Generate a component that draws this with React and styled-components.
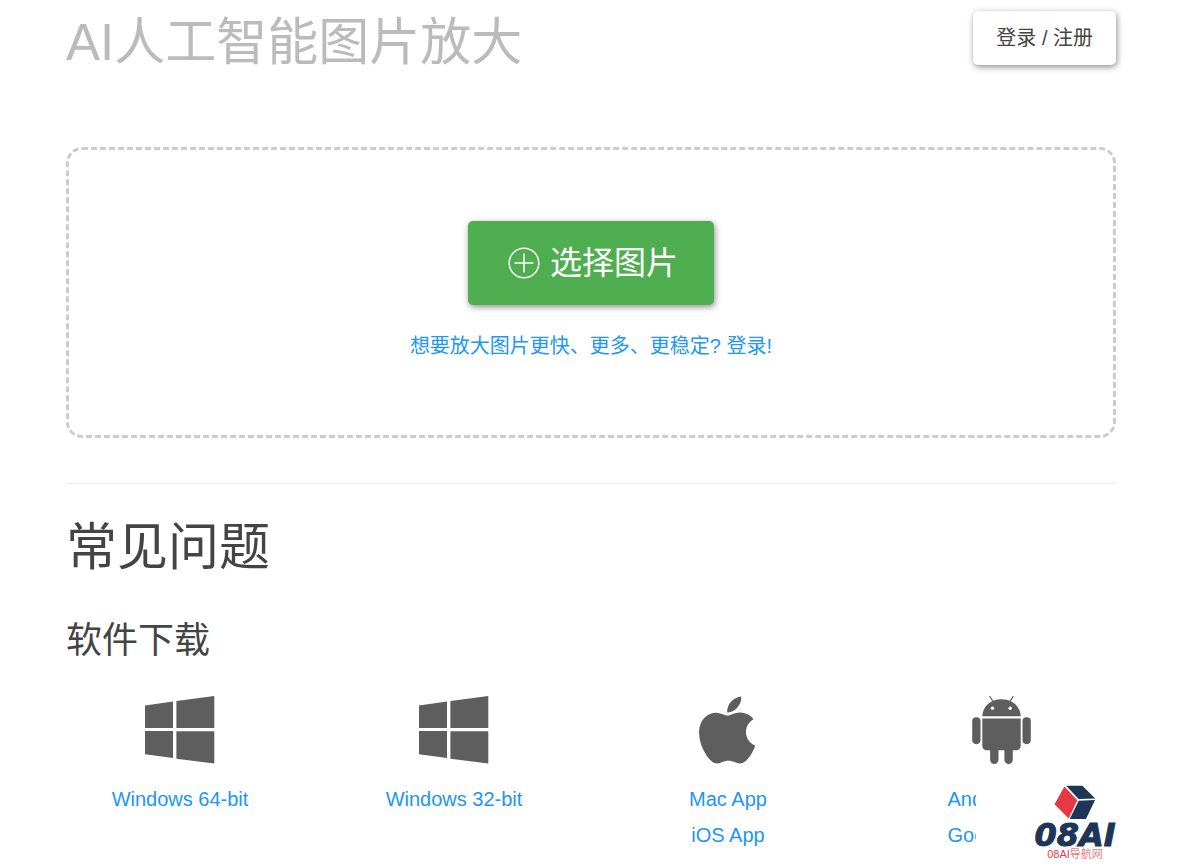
import React from 'react';
import styled, { createGlobalStyle } from 'styled-components';

const GlobalStyle = createGlobalStyle`
  * {
    box-sizing: border-box;
  }
  body {
    margin: 0;
    background: #fff;
    color: #444;
    font-family: "Liberation Sans", "Noto Sans CJK SC", sans-serif;
    font-size: 20px;
    line-height: 36px;
  }
`;

const Page = styled.div`
  padding: 11px 66px 15px;
`;

const Header = styled.header`
  display: flex;
  justify-content: space-between;
  align-items: flex-start;
  margin-bottom: 72px;
`;

const Title = styled.h1`
  margin: 0;
  font-size: 51px;
  font-weight: 400;
  line-height: 64px;
  color: #bbb;
`;

const Button = styled.button`
  border: 0;
  border-radius: 5px;
  font-family: inherit;
  cursor: pointer;
  box-shadow: 1px 2px 6px rgba(0, 0, 0, 0.45);
`;

const LoginButton = styled(Button)`
  padding: 16px 23px;
  background: #fff;
  color: #444;
  font-size: 20px;
  line-height: 22px;
`;

const SelectButton = styled(Button)`
  display: flex;
  align-items: center;
  gap: 10px;
  padding: 20px 36px 20px 40px;
  background: #4faf50;
  color: #fff;
  font-size: 32px;
  line-height: 44px;
`;

const DropZone = styled.section`
  display: flex;
  flex-direction: column;
  align-items: center;
  gap: 23px;
  padding: 71px 20px;
  border: 3px dashed #ccc;
  border-radius: 16px;
`;

const Link = styled.a`
  color: #2196f3;
  text-decoration: none;
`;

const Divider = styled.hr`
  height: 1px;
  margin: 45px 0 26px;
  border: 0;
  background: #eee;
`;

const Heading = styled.h2`
  margin: 0 0 28px;
  font-size: 51px;
  font-weight: 400;
  line-height: 76px;
`;

const SubHeading = styled.h3`
  margin: 0 0 28px;
  font-size: 36px;
  font-weight: 400;
  line-height: 54px;
`;

const Downloads = styled.div`
  display: grid;
  grid-template-columns: repeat(4, 1fr);
  margin: 0 -23px;
`;

const Platform = styled.div`
  display: flex;
  flex-direction: column;
  align-items: center;
  svg {
    height: 68px;
    margin-bottom: 17px;
    fill: #5e5e5e;
  }
`;

const Badge = styled.aside`
  position: fixed;
  right: 0;
  bottom: 0;
  display: flex;
  flex-direction: column;
  align-items: center;
  width: 206px;
  padding: 9px 8px 8px 0;
  background: #fff;
`;

const BadgeName = styled.div`
  margin-top: 2px;
  color: #1d3557;
  font-family: "DejaVu Sans", sans-serif;
  font-size: 32px;
  font-weight: 700;
  font-style: italic;
  line-height: 26px;
  -webkit-text-stroke: 1px #1d3557;
`;

const BadgeCaption = styled.div`
  color: #e63946;
  font-size: 11px;
  font-weight: 300;
  line-height: 12px;
`;

const PlusIcon = () => (
  <svg width="32" height="32" viewBox="0 0 32 32" fill="none" stroke="#fff" strokeWidth="1.5" aria-hidden="true">
    <circle cx="16" cy="16" r="14.8" />
    <path d="M16 6.5v19M6.5 16h19" />
  </svg>
);

const WindowsIcon = () => (
  <svg width="70" height="68" viewBox="0 0 70 68" aria-hidden="true">
    <path d="M0 9.4L28 5.5V32H0zM31.4 5L69.3 0v32H31.4zM0 35h28v27L0 58.3zM31.4 35.2h37.9v32.3l-37.9-4.8z" />
  </svg>
);

const AppleIcon = () => (
  <svg width="58" height="68" viewBox="4 32 388 448" aria-hidden="true">
    <path d="M318.7 268.7c-.2-36.7 16.4-64.4 50-84.8-18.8-26.9-47.2-41.7-84.7-44.6-35.5-2.8-74.3 20.7-88.5 20.7-15 0-49.4-19.7-76.4-19.7C63.3 141.2 4 184.8 4 273.5q0 39.3 14.4 81.2c12.8 36.7 59 126.7 107.2 125.2 25.2-.6 43-17.9 75.8-17.9 31.8 0 48.3 17.9 76.4 17.9 48.6-.7 90.4-82.5 102.6-119.3-65.2-30.7-61.7-90-61.7-91.9zm-56.6-164.2c27.3-32.4 24.8-61.9 24-72.5-24.1 1.4-52 16.4-67.9 34.9-17.5 19.8-27.8 44.3-25.6 71.9 26.1 2 49.9-11.4 69.5-34.3z" />
  </svg>
);

const AndroidIcon = () => (
  <svg width="60" height="68" viewBox="0 0 60 68" aria-hidden="true">
    <path d="M17.8.3l3.6 6M41.2.3l-3.6 6" stroke="#5e5e5e" strokeWidth="1.2" strokeLinecap="round" />
    <path d="M10.3 20.2C10.6 10.5 18.5 3.3 29.5 3.3S48.4 10.5 48.7 20.2z" />
    <path d="M10.3 22.4h38.4V50a4.2 4.2 0 0 1-4.2 4.2h-30a4.2 4.2 0 0 1-4.2-4.2z" />
    <rect x="0.2" y="21.2" width="8.3" height="27" rx="4.1" />
    <rect x="50.5" y="21.2" width="8.3" height="27" rx="4.1" />
    <rect x="18.1" y="46" width="8.4" height="22" rx="4.2" />
    <rect x="32.4" y="46" width="8.4" height="22" rx="4.2" />
    <circle cx="20.5" cy="12.3" r="1.7" fill="#fff" />
    <circle cx="38.2" cy="12.3" r="1.7" fill="#fff" />
  </svg>
);

const CubeIcon = () => (
  <svg width="42" height="35" viewBox="0 0 42 35" aria-hidden="true">
    <path d="M10.4 1.5L23.3 15.3 14.7 33.4.5 19.3z" fill="#e63946" />
    <path d="M12.2.8h16.2L41.2 13.4l-16.6.7zM24.7 15.7l16.4-.6L32 33.9H15.7z" fill="#1d3557" />
  </svg>
);

const platforms = [
  { icon: WindowsIcon, links: ['Windows 64-bit'] },
  { icon: WindowsIcon, links: ['Windows 32-bit'] },
  { icon: AppleIcon, links: ['Mac App', 'iOS App'] },
  { icon: AndroidIcon, links: ['Android App', 'Google Play'] },
];

export default () => {
  return (
    <>
      <GlobalStyle />
      <Page>
        <Header>
          <Title>AI人工智能图片放大</Title>
          <LoginButton type="button">登录 / 注册</LoginButton>
        </Header>
        <main>
          <DropZone>
            <SelectButton type="button">
              <PlusIcon />
              选择图片
            </SelectButton>
            <Link href="#login">想要放大图片更快、更多、更稳定? 登录!</Link>
          </DropZone>
          <Divider />
          <Heading>常见问题</Heading>
          <SubHeading>软件下载</SubHeading>
          <Downloads>
            {platforms.map(({ icon: Icon, links }) => (
              <Platform key={links[0]}>
                <Icon />
                {links.map(link => <Link key={link} href="#download">{link}</Link>)}
              </Platform>
            ))}
          </Downloads>
        </main>
      </Page>
      <Badge>
        <CubeIcon />
        <BadgeName>08AI</BadgeName>
        <BadgeCaption>08AI导航网</BadgeCaption>
      </Badge>
    </>
  )
};
